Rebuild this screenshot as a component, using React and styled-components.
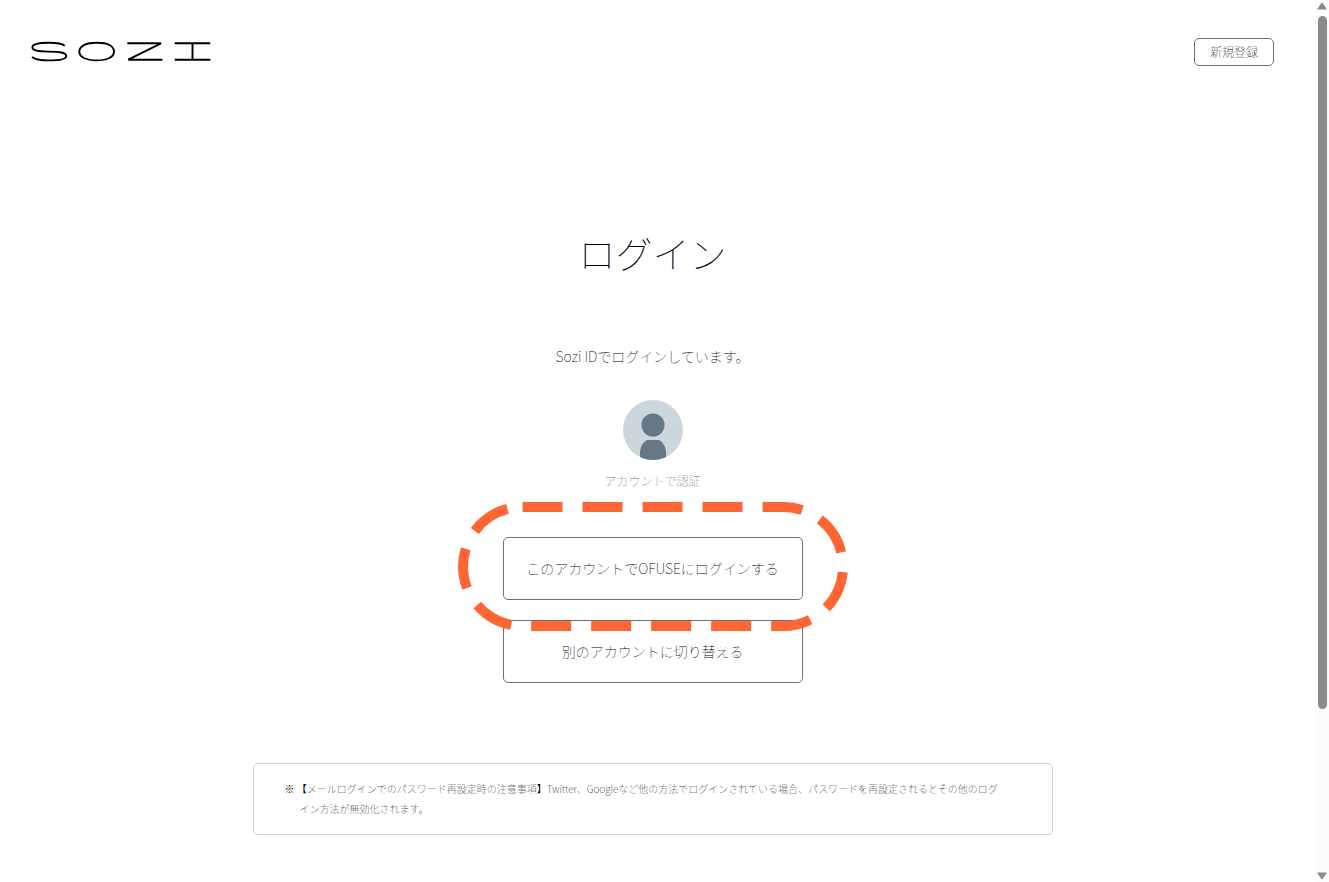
import React from 'react';
import styled, { createGlobalStyle } from 'styled-components';

const GlobalStyle = createGlobalStyle`
  * {
    box-sizing: border-box;
  }

  body {
    margin: 0;
    background: #fff;
    color: #000;
    font-family: 'Noto Sans CJK JP', sans-serif;
    font-weight: 100;
    overflow: hidden;
  }
`;

const Page = styled.div`
  display: flex;
  height: 100vh;
  overflow: hidden;
`;

const Content = styled.div`
  flex: 1;
  min-width: 0;
`;

const Header = styled.header`
  display: flex;
  align-items: center;
  justify-content: space-between;
  height: 104px;
  padding: 0 41px 0 31px;
`;

const LogoLink = styled.a`
  display: block;
  line-height: 0;
`;

const RegisterButton = styled.button`
  width: 80px;
  height: 28px;
  padding: 0 0 2px;
  background: #fff;
  border: 1px solid #707070;
  border-radius: 5px;
  color: #000;
  font: inherit;
  font-size: 12px;
  cursor: pointer;
`;

const Main = styled.main`
  display: flex;
  flex-direction: column;
  align-items: center;
  padding: 121px 34px 0 24px;
`;

const Title = styled.h1`
  margin: 0;
  font-size: 37px;
  font-weight: 100;
  line-height: 56px;
`;

const Status = styled.p`
  margin: 64px 0 33px;
  font-size: 14px;
  line-height: 22px;
`;

const AccountLabel = styled.p`
  margin: 10px 0 45px;
  color: #707070;
  font-size: 12px;
  line-height: 22px;
`;

const Actions = styled.div`
  display: flex;
  flex-direction: column;
  gap: 20px;
  width: 300px;
`;

const Highlighted = styled.div`
  position: relative;
  display: flex;
`;

const Ring = styled.svg`
  position: absolute;
  top: -36px;
  left: -45px;
  z-index: 1;
  pointer-events: none;
`;

const ActionButton = styled.button`
  width: 100%;
  height: 63px;
  padding: 0 0 2px;
  background: #fff;
  border: 1px solid #707070;
  border-radius: 5px;
  color: #000;
  font: inherit;
  font-size: 14px;
  cursor: pointer;
`;

const Notice = styled.section`
  width: 100%;
  max-width: 800px;
  margin-top: 80px;
  padding: 15px 48px 15px 31px;
  border: 1px solid #d0d0d8;
  border-radius: 5px;
`;

const NoticeText = styled.p`
  margin: 0;
  padding-left: 15px;
  text-indent: -15px;
  font-size: 10px;
  line-height: 20px;
`;

const Mark = styled.span`
  font-weight: 400;
`;

const ScrollRail = styled.div`
  display: flex;
  flex-direction: column;
  align-items: center;
  width: 14px;
  padding: 2px 0;
  background: #fcfcfc;
`;

const ScrollTrack = styled.div`
  flex: 1;
  width: 9px;
  padding: 6px 0;
`;

const ScrollThumb = styled.div`
  height: calc(82% - 4px);
  background: #8b8b8b;
  border-radius: 5px;
`;

function Logo() {
  return (
    <svg width="181" height="22" viewBox="0 0 181 22" fill="none" stroke="#000" strokeWidth="1.9">
      <path d="M33.7 4.8C31 2.5 25 1.7 18 1.7C7.5 1.7 1.4 3 1.4 6.3C1.4 9.7 7 10.5 17 10.6C29 10.7 35.2 11.2 35.2 14.9C35.2 18.3 28 19.4 18 19.4C9.5 19.4 4 18.5 1 16" />
      <path d="M65.7 1.7C76.5 1.7 83 5 83 10.5C83 16 76.5 19.4 65.7 19.4C54.9 19.4 48.3 16 48.3 10.5C48.3 5 54.9 1.7 65.7 1.7Z" />
      <path d="M96.3 2.3H130L97.3 18.7H131.3" />
      <path d="M143.7 2.3H179.3M143.7 18.7H179.3M161.5 2.3V18.7" />
    </svg>
  );
}

function Avatar() {
  return (
    <svg width="60" height="60" viewBox="0 0 60 60" role="img" aria-label="アカウント">
      <clipPath id="avatar-clip">
        <circle cx="30" cy="30" r="30" />
      </clipPath>
      <g clipPath="url(#avatar-clip)">
        <rect width="60" height="60" fill="#ccd6dd" />
        <circle cx="30" cy="25" r="11.5" fill="#667786" />
        <path d="M17 60V53C17 47 20 42 24 40H36C40 42 43 47 43 53V60Z" fill="#667786" />
      </g>
    </svg>
  );
}

function Arrow({ down }) {
  return (
    <svg width="10" height="8" viewBox="0 0 10 8">
      <path
        d={down ? 'M1 .5H9Q10 .5 9.4 1.5L6 6.6Q5 8 4 6.6L.6 1.5Q0 .5 1 .5Z' : 'M1 7.5H9Q10 7.5 9.4 6.5L6 1.4Q5 0 4 1.4L.6 6.5Q0 7.5 1 7.5Z'}
        fill="#8b8b8b"
      />
    </svg>
  );
}

export default function App() {
  return (
    <>
      <GlobalStyle />
      <Page>
        <Content>
          <Header>
            <LogoLink href="#" aria-label="SOZI">
              <Logo />
            </LogoLink>
            <RegisterButton type="button">新規登録</RegisterButton>
          </Header>
          <Main>
            <Title>ログイン</Title>
            <Status>Sozi IDでログインしています。</Status>
            <Avatar />
            <AccountLabel>アカウントで認証</AccountLabel>
            <Actions>
              <Highlighted>
                <ActionButton type="button">このアカウントでOFUSEにログインする</ActionButton>
                <Ring width="390" height="130" viewBox="0 0 390 130">
                  <rect
                    x="5"
                    y="6"
                    width="380"
                    height="119"
                    rx="59.5"
                    fill="none"
                    stroke="#ff6633"
                    strokeWidth="10"
                    strokeDasharray="40 20"
                  />
                </Ring>
              </Highlighted>
              <ActionButton type="button">別のアカウントに切り替える</ActionButton>
            </Actions>
            <Notice>
              <NoticeText>
                <Mark>※</Mark> <Mark>【</Mark>メールログインでのパスワード再設定時の注意事項<Mark>】</Mark>
                Twitter、Googleなど他の方法でログインされている場合、パスワードを再設定されるとその他のログイン方法が無効化されます。
              </NoticeText>
            </Notice>
          </Main>
        </Content>
        <ScrollRail>
          <Arrow />
          <ScrollTrack>
            <ScrollThumb />
          </ScrollTrack>
          <Arrow down />
        </ScrollRail>
      </Page>
    </>
  );
}
